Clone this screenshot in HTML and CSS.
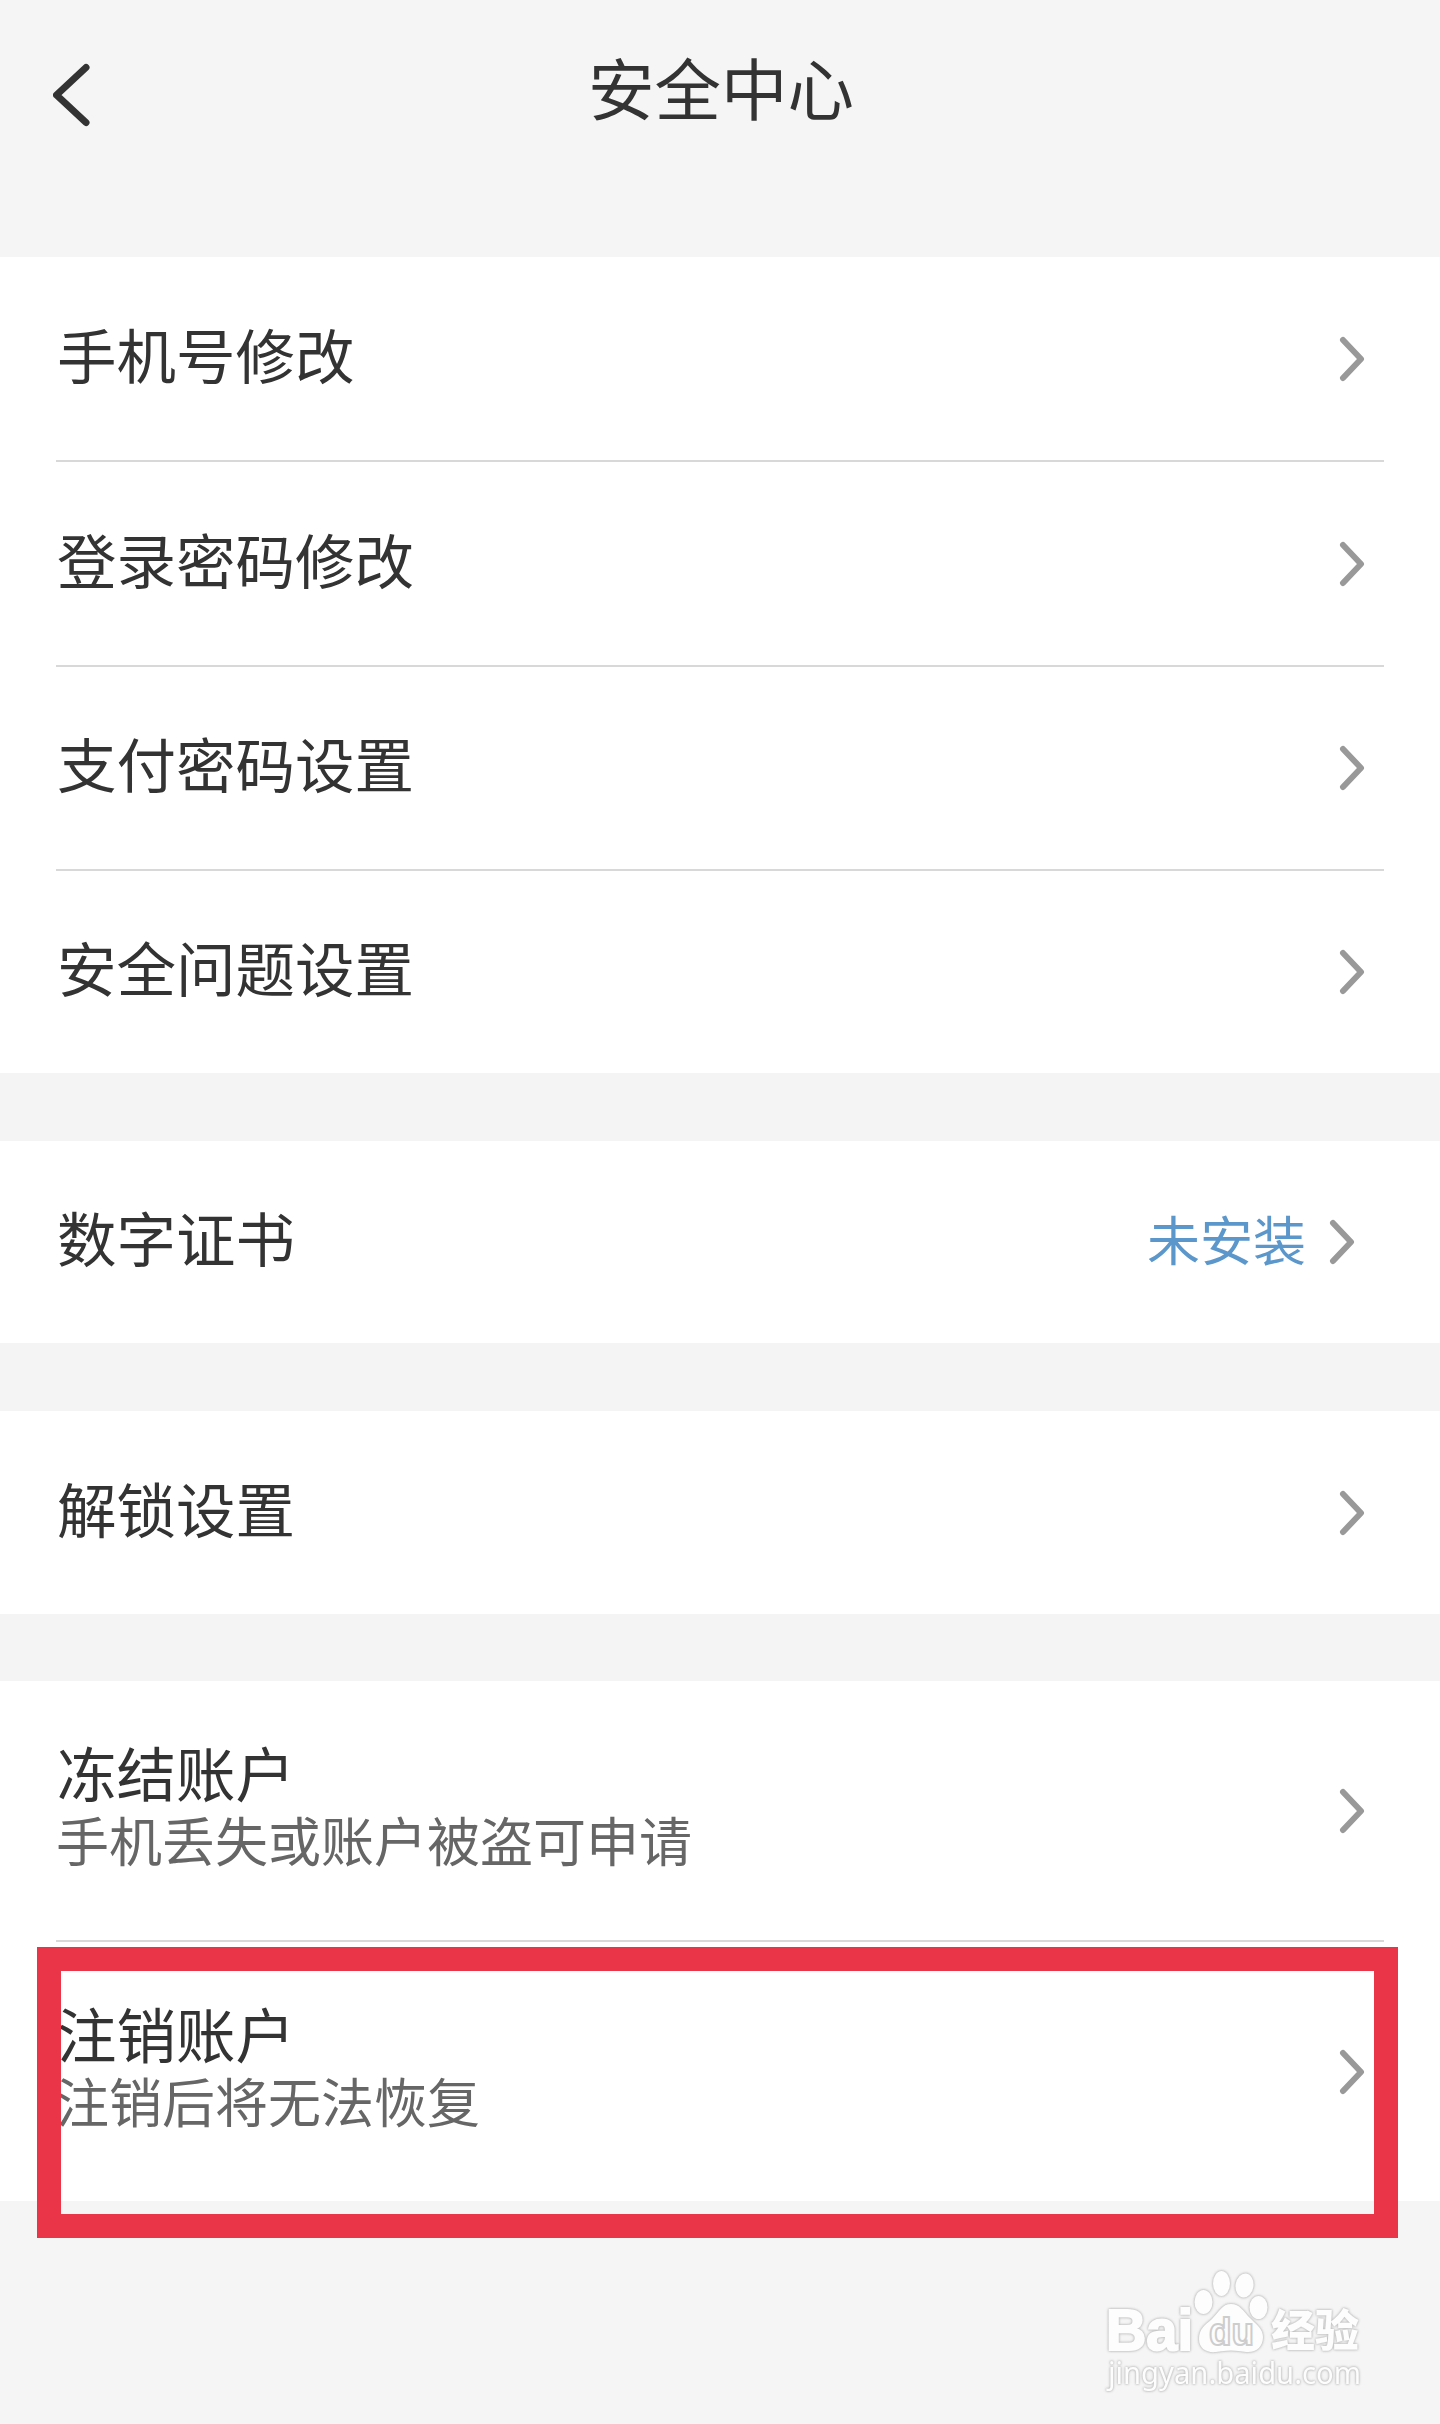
FILE: index.html
```html
<!DOCTYPE html>
<html lang="zh-CN">
<head>
<meta charset="utf-8">
<title>安全中心</title>
<link rel="stylesheet" href="styles.css">
</head>
<body>
<svg width="0" height="0" class="defs"><defs><symbol id="chev" viewBox="0 0 26 46"><path d="M4 4L22 23L4 42"/></symbol></defs></svg>
<header class="header">
  <svg class="back" viewBox="0 0 38 64"><path d="M33 4.500L3.500 32L33 59.500"/></svg>
  <h1 class="title">安全中心</h1>
</header>
<main class="groups">
  <section class="group">
    <div class="row row-first"><span class="label">手机号修改</span><svg class="chev"><use href="#chev"/></svg></div>
    <div class="row row-second"><span class="label">登录密码修改</span><svg class="chev"><use href="#chev"/></svg></div>
    <div class="row"><span class="label">支付密码设置</span><svg class="chev"><use href="#chev"/></svg></div>
    <div class="row"><span class="label">安全问题设置</span><svg class="chev"><use href="#chev"/></svg></div>
  </section>
  <section class="group">
    <div class="row row-status"><span class="label">数字证书</span><span class="status">未安装</span><svg class="chev"><use href="#chev"/></svg></div>
  </section>
  <section class="group">
    <div class="row row-first"><span class="label">解锁设置</span><svg class="chev"><use href="#chev"/></svg></div>
  </section>
  <section class="group group-account">
    <div class="row row-freeze"><div class="text"><span class="label">冻结账户</span><span class="sub">手机丢失或账户被盗可申请</span></div><svg class="chev"><use href="#chev"/></svg></div>
    <div class="row row-cancel"><div class="text"><span class="label">注销账户</span><span class="sub">注销后将无法恢复</span></div><svg class="chev"><use href="#chev"/></svg><div class="highlight"></div></div>
  </section>
</main>
<svg class="watermark" viewBox="0 0 270 134">
  <g class="mark">
    <ellipse cx="103.500" cy="40" rx="9" ry="12"/>
    <ellipse cx="121.500" cy="21.500" rx="8.500" ry="12.500"/>
    <ellipse cx="144.500" cy="23.500" rx="9" ry="12" transform="rotate(8 144.500 23.500)"/>
    <ellipse cx="158.500" cy="45.500" rx="9" ry="11.500"/>
    <path d="M131 42C122 42 119 50 112 57C105 63 99 67 99 77C99 87 107 91 116 90C126 88 136 88 146 90C156 91 163 85 163 75C163 67 156 62 150 56C143 49 140 42 131 42Z"/>
    <text class="bai" x="6" y="87.500" textLength="87" lengthAdjust="spacingAndGlyphs">Bai</text>
    <text class="jy" x="171" y="84.500" textLength="88" lengthAdjust="spacingAndGlyphs">经验</text>
    <text class="url" x="8" y="121.500" textLength="253" lengthAdjust="spacingAndGlyphs">jingyan.baidu.com</text>
  </g>
  <text class="du" x="109" y="83" textLength="45" lengthAdjust="spacingAndGlyphs">du</text>
</svg>
</body>
</html>
```
FILE: styles.css
```css
* { box-sizing: border-box; }
body {
  margin: 0;
  width: 1440px;
  height: 2424px;
  position: relative;
  overflow: hidden;
  background: #f5f5f5;
  color: #333;
  font-family: "Noto Sans CJK SC", sans-serif;
}
.defs { position: absolute; }
.header {
  height: 257px;
  padding: 63px 52px 0 53px;
  display: grid;
  grid-template-columns: 38px 1fr 38px;
}
.back { width: 38px; height: 64px; fill: none; stroke: #333; stroke-width: 7; stroke-linecap: round; stroke-linejoin: round; }
.title { margin: -10px 0 0 1px; font-size: 66.500px; line-height: 66px; font-weight: 400; text-align: center; }
.groups { display: flex; flex-direction: column; gap: 68px; background: #f4f4f4; }
.group { background: #fff; padding: 0 56px; }
.group-account { margin-top: -1px; }
.row { height: 204px; display: flex; align-items: center; justify-content: space-between; position: relative; padding-right: 19px; }
.row + .row { border-top: 2px solid #d8d8d8; }
.row-first { height: 203px; }
.row.row-second { height: 205px; }
.row-status { height: 202px; padding-right: 29px; }
.row-freeze { height: 259px; }
.row.row-cancel { height: 261px; }
.text { display: flex; flex-direction: column; padding-bottom: 10px; }
.label { font-size: 59.500px; line-height: 66px; padding-left: 1px; }
.row > .label { padding-bottom: 12px; }
.sub { font-size: 53px; line-height: 70px; color: #666; }
.status { margin-left: auto; margin-right: 23px; padding-bottom: 9px; font-size: 53px; line-height: 66px; color: #5c97cc; }
.chev { width: 26px; height: 46px; flex: none; fill: none; stroke: #999; stroke-width: 6; stroke-linecap: round; stroke-linejoin: round; }
.highlight { position: absolute; left: -19px; top: 5px; width: 1361px; height: 291px; border: 24px solid #ea3447; }
.watermark { position: absolute; left: 1100px; top: 2262px; width: 270px; height: 134px; }
.mark { fill: #fdfdfd; filter: drop-shadow(0 0 1px #bbb) drop-shadow(0 0 1px #ccc); }
.bai { font: 700 57px "Liberation Sans", sans-serif; stroke: #fdfdfd; stroke-width: 2; }
.du { font: 700 38px "Liberation Sans", sans-serif; fill: #fdfdfd; stroke: #cdcdcd; stroke-width: 2; }
.jy { font: 900 44px "Noto Sans CJK SC", sans-serif; }
.url { font: 400 30.500px "Noto Sans", sans-serif; }
```
